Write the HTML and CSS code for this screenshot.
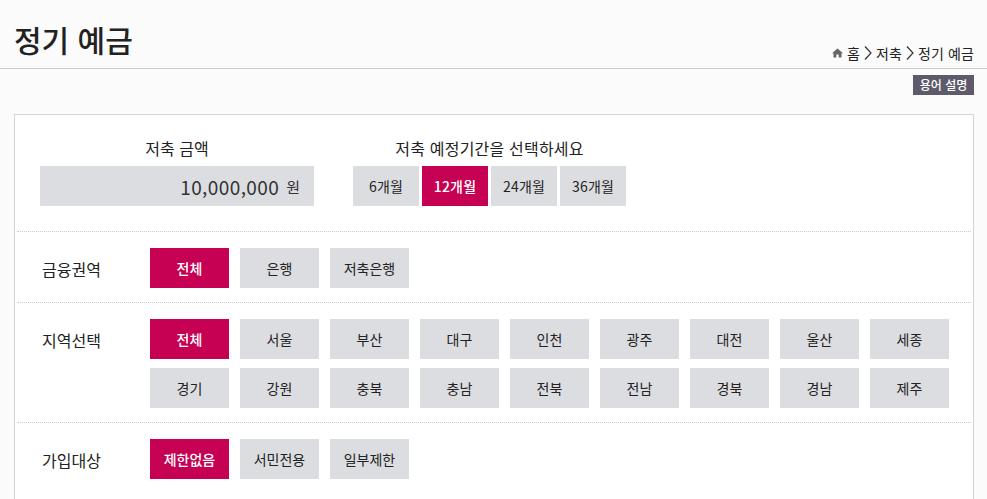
FILE: index.html
```html
<!DOCTYPE html>
<html lang="ko">
<head>
<meta charset="utf-8">
<title>정기 예금</title>
<link rel="stylesheet" href="styles.css">
</head>
<body>
<header class="head">
  <h1 class="title">정기 예금</h1>
  <nav class="crumbs">
    <svg class="home" viewBox="0 0 12 10" width="11" height="10"><path d="M6 0 L12 5.2 H10.4 V10 H7.3 V6.6 H4.7 V10 H1.6 V5.2 H0 Z" fill="#666"/></svg>
    <span>홈</span><svg class="chev" viewBox="0 0 8 14" width="8" height="14"><path d="M1 0.5 L7 7 L1 13.5" fill="none" stroke="#333" stroke-width="1.2"/></svg><span>저축</span><svg class="chev" viewBox="0 0 8 14" width="8" height="14"><path d="M1 0.5 L7 7 L1 13.5" fill="none" stroke="#333" stroke-width="1.2"/></svg><span>정기 예금</span>
  </nav>
</header>
<div class="tools"><a class="terms">용어 설명</a></div>
<main class="card">
  <section class="top">
    <div class="amount">
      <h2 class="cap">저축 금액</h2>
      <div class="amount-box"><span class="num">10,000,000</span><span class="won">원</span></div>
    </div>
    <div class="period">
      <h2 class="cap">저축 예정기간을 선택하세요</h2>
      <div class="periods">
        <a class="pbtn">6개월</a><a class="pbtn on">12개월</a><a class="pbtn">24개월</a><a class="pbtn">36개월</a>
      </div>
    </div>
  </section>
  <section class="row">
    <div class="label">금융권역</div>
    <div class="btns">
      <a class="btn on">전체</a><a class="btn">은행</a><a class="btn">저축은행</a>
    </div>
  </section>
  <section class="row">
    <div class="label">지역선택</div>
    <div class="btns">
      <a class="btn on">전체</a><a class="btn">서울</a><a class="btn">부산</a><a class="btn">대구</a><a class="btn">인천</a><a class="btn">광주</a><a class="btn">대전</a><a class="btn">울산</a><a class="btn">세종</a>
      <a class="btn">경기</a><a class="btn">강원</a><a class="btn">충북</a><a class="btn">충남</a><a class="btn">전북</a><a class="btn">전남</a><a class="btn">경북</a><a class="btn">경남</a><a class="btn">제주</a>
    </div>
  </section>
  <section class="row">
    <div class="label">가입대상</div>
    <div class="btns">
      <a class="btn on">제한없음</a><a class="btn">서민전용</a><a class="btn">일부제한</a>
    </div>
  </section>
</main>
</body>
</html>
```
FILE: styles.css
```css
html, body { margin: 0; padding: 0; height: 499px; overflow: hidden; }
body {
  background: #fbfbfb;
  color: #222;
  font-family: "Noto Sans CJK KR", "Noto Sans", sans-serif;
}
.head {
  height: 68px;
  border-bottom: 1px solid #ccc;
  display: flex;
  justify-content: space-between;
  align-items: flex-end;
  padding: 0 13px 0 14px;
}
.title {
  margin: 0 0 9px;
  font-size: 30px;
  font-weight: 500;
  line-height: 40px;
  color: #222;
}
.crumbs {
  display: flex;
  align-items: center;
  gap: 4px;
  font-size: 14px;
  line-height: 20px;
  margin-bottom: 5px;
  color: #222;
}
.crumbs span { letter-spacing: 0.1px; }
.tools { display: flex; justify-content: flex-end; padding: 6px 13px 0 0; height: 20px; }
.terms {
  width: 61px;
  height: 20px;
  background: #5d5a6b;
  color: #fff;
  font-size: 12px;
  font-weight: 500;
  line-height: 20px;
  text-align: center;
}
.card {
  margin: 19px 13px 0 14px;
  background: #fff;
  border: 1px solid #d5d5d5;
  padding: 0 2px 40px;
}
.top {
  display: flex;
  padding: 20px 0 25px 23px;
  gap: 39px;
  height: 71px;
}
.cap {
  margin: 0 0 5px;
  font-size: 16px;
  font-weight: 400;
  line-height: 26px;
  text-align: center;
  color: #222;
}
.period .cap { letter-spacing: 0.2px; }
.amount { width: 274px; }
.amount-box {
  height: 40px;
  background: #dcdde1;
  display: flex;
  justify-content: flex-end;
  align-items: center;
  gap: 7px;
  padding-right: 14px;
  color: #333;
}
.num { font-size: 19px; letter-spacing: 0.4px; }
.won { font-size: 15px; }
.periods { display: flex; gap: 3px; }
.pbtn {
  width: 66px;
  height: 40px;
  background: #dcdde1;
  font-size: 14px;
  letter-spacing: 0.2px;
  line-height: 40px;
  text-align: center;
  color: #222;
}
.pbtn.on, .btn.on { background: #c60052; color: #fff; font-weight: 500; }
.row {
  display: flex;
  border-top: 1px dotted #ccc;
  padding: 16px 0 14px 25px;
}
.label {
  width: 108px;
  font-size: 16px;
  line-height: 42px;
  height: 40px;
  color: #222;
}
.btns {
  display: grid;
  grid-template-columns: repeat(9, 79px);
  column-gap: 11px;
  row-gap: 9px;
}
.btn {
  height: 40px;
  background: #dcdde1;
  font-size: 14px;
  line-height: 40px;
  text-align: center;
  color: #222;
}
```
